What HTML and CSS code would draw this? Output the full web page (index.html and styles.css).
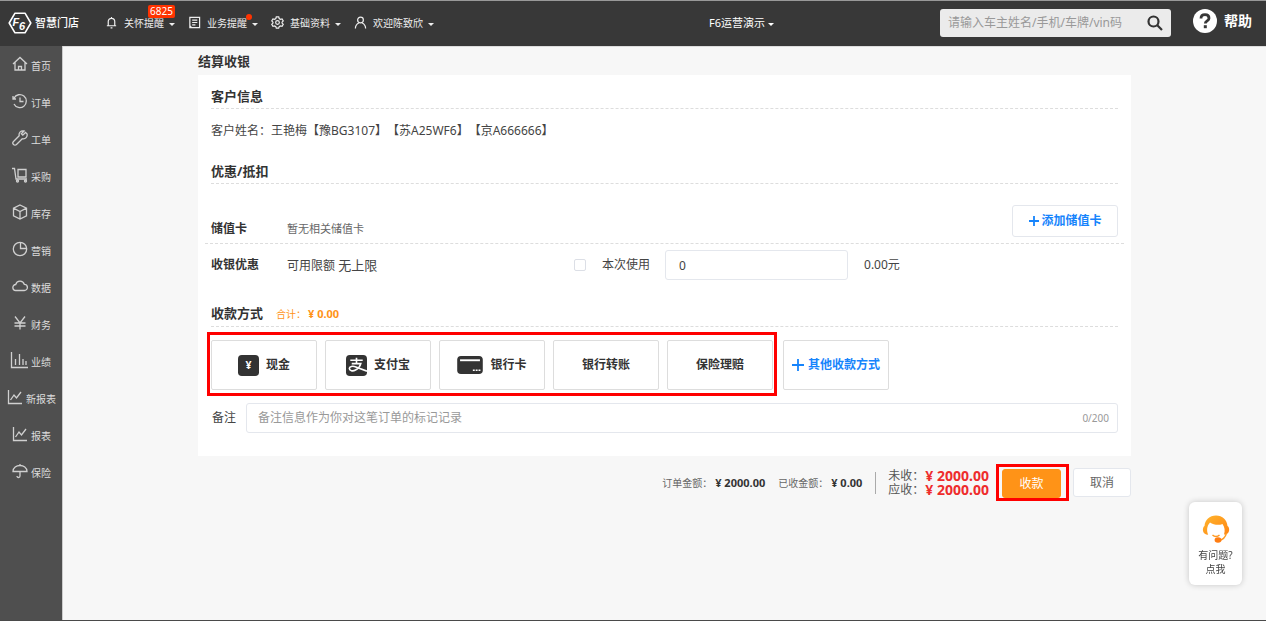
FILE: index.html
```html
<!DOCTYPE html>
<html lang="zh-CN">
<head>
<meta charset="utf-8">
<title>结算收银</title>
<link rel="stylesheet" href="styles.css">
</head>
<body>
<header class="topbar">
  <a class="brand" href="#">
    <svg class="brand-mark" viewBox="0 0 24 22" aria-hidden="true">
      <path d="M7 1.2h10L22.8 11 17 20.8H7L1.2 11z" fill="none" stroke="#fff" stroke-width="1.6" stroke-linejoin="round"/>
      <text x="4.500" y="13.500" class="mark-letter">F</text>
      <text x="11" y="17.500" class="mark-letter">6</text>
    </svg>
    <span class="brand-name">智慧门店</span>
  </a>
  <nav class="menu">
    <button class="menu-item" type="button">
      <svg class="ico" viewBox="0 0 14 14"><path d="M3.5 10.5V6a3.5 3.5 0 0 1 7 0v4.500M2 10.500h10M7 2.500V1M6 12.800h2"/></svg>
      <span>关怀提醒</span><i class="caret"></i><b class="badge">6825</b>
    </button>
    <button class="menu-item" type="button">
      <svg class="ico" viewBox="0 0 14 14"><path d="M2 1.500h10.500v11H2zM4.500 4.500H10M4.500 7H10M4.500 9.500H8M2 10.500l2 2"/></svg>
      <span>业务提醒</span><i class="caret"></i><b class="dot"></b>
    </button>
    <button class="menu-item" type="button">
      <svg class="ico" viewBox="0 0 14 14"><path d="M5.700 1h2.600l.5 1.700 1.300.8 1.800-.4 1.300 2.200-1.300 1.300v1l1.300 1.300-1.300 2.200-1.800-.4-1.300.8-.5 1.500H5.700l-.5-1.500-1.300-.8-1.800.4L.8 8.900l1.300-1.300v-1L.8 5.300l1.300-2.200 1.800.4 1.300-.8z"/><circle cx="7" cy="7" r="2"/></svg>
      <span>基础资料</span><i class="caret"></i>
    </button>
    <button class="menu-item" type="button">
      <svg class="ico" viewBox="0 0 14 14"><circle cx="7" cy="4.300" r="3.100"/><path d="M1.500 13.500c0-3 1.500-5 3.700-6M12.500 13.500c0-3-1.500-5-3.700-6"/></svg>
      <span>欢迎陈致欣</span><i class="caret"></i>
    </button>
  </nav>
  <button class="store" type="button">F6运营演示<i class="caret"></i></button>
  <form class="search">
    <input type="text" aria-label="搜索" placeholder="请输入车主姓名/手机/车牌/vin码">
    <button type="button" aria-label="搜索">
      <svg viewBox="0 0 16 16"><circle cx="6.500" cy="6.500" r="5"/><path d="M10.300 10.300L15 15"/></svg>
    </button>
  </form>
  <a class="help" href="#">
    <svg viewBox="0 0 24 24" aria-hidden="true"><circle cx="12" cy="12" r="12" fill="#fff"/><path d="M8 9.500C8 7 9.700 5.700 12 5.700s4 1.300 4 3.500c0 2.600-3.700 2.600-3.700 5.300" fill="none" stroke="#383838" stroke-width="2.800"/><rect x="10.800" y="16.200" width="3" height="3" fill="#383838"/></svg>
    <span>帮助</span>
  </a>
</header>

<div class="shell">
  <aside class="sidebar">
    <a href="#"><svg viewBox="0 0 16 16"><path d="M1 8l7-6.500L15 8M3 6.500V14h10V6.500M6.500 14v-3.500h3V14"/></svg>首页</a>
    <a href="#"><svg viewBox="0 0 16 16"><path d="M2 5.200A6.500 6.500 0 1 1 2 11M1 3v3h3M8 4.500V8.500h3.500"/></svg>订单</a>
    <a href="#"><svg viewBox="0 0 16 16"><path d="M13.500 2.500l-2.700 2.700-1.500-1.500L12 1C9 .2 6.500 2.500 7.200 5.700L1.500 11.500a2 2 0 0 0 3 3l5.800-5.700c3.200.7 5.500-2 4.700-5z"/></svg>工单</a>
    <a href="#"><svg viewBox="0 0 16 16"><path d="M0 1.500h2.500L4 12h11M6 2.500h8V10H6z"/><circle cx="5.500" cy="14" r="1"/><circle cx="13.500" cy="14" r="1"/></svg>采购</a>
    <a href="#"><svg viewBox="0 0 16 16"><path d="M8 1l6.500 3.200v7.600L8 15l-6.500-3.200V4.200zM1.500 4.200L8 7.500l6.500-3.300M8 7.500V15"/></svg>库存</a>
    <a href="#"><svg viewBox="0 0 16 16"><circle cx="8" cy="8" r="6.700"/><path d="M8.500 1.500v6h6"/></svg>营销</a>
    <a href="#"><svg viewBox="0 0 16 16"><path d="M4 12.500a3 3 0 0 1-.3-6A4.500 4.500 0 0 1 12.300 6.300a3.100 3.100 0 0 1 0 6.200z"/></svg>数据</a>
    <a href="#"><svg viewBox="0 0 16 16"><path d="M3 1.500L8 8l5-6.500M8 8v6.500M2.500 8h11M2.500 11h11"/></svg>财务</a>
    <a href="#"><svg class="wide" viewBox="0 0 18 18"><path d="M1.500 1v15.500H18M5.500 14V8M9.500 14V3M13 14V8M16 14v-4"/></svg>业绩</a>
    <a href="#"><svg viewBox="0 0 16 16"><path d="M1.500 1v13.500H15M3.500 11L7 6l2.500 3 4.500-6"/></svg>新报表</a>
    <a href="#"><svg viewBox="0 0 16 16"><path d="M1.500 1v13.500H15M3.500 11L7 6l2.500 3 4.500-6"/></svg>报表</a>
    <a href="#"><svg viewBox="0 0 16 16"><path d="M1 8.500c0-8 14-8 14 0zM8 8.500V13a1.500 1.500 0 0 1-3 0M8 1v1.500"/></svg>保险</a>
  </aside>

  <main class="main">
    <div class="page">
      <h1 class="page-title">结算收银</h1>
      <section class="card">
        <h2 class="section-title">客户信息</h2>
        <p class="customer">客户姓名：王艳梅【豫BG3107】【苏A25WF6】【京A666666】</p>

        <h2 class="section-title">优惠/抵扣</h2>
        <div class="row row-card">
          <strong class="row-name">储值卡</strong>
          <span class="row-hint">暂无相关储值卡</span>
          <button class="btn add-card" type="button">
            <svg viewBox="0 0 12 12"><path d="M6 1v10M1 6h10"/></svg>添加储值卡
          </button>
        </div>
        <div class="row row-discount">
          <strong class="row-name">收银优惠</strong>
          <span class="limit">可用限额 <em>无上限</em></span>
          <label class="use"><input type="checkbox"><span>本次使用</span></label>
          <input class="amount" type="text" value="0" aria-label="本次使用金额">
          <span class="money">0.00元</span>
        </div>

        <h2 class="section-title">收款方式<small class="total">合计：<b>¥ 0.00</b></small></h2>
        <div class="methods">
          <div class="method-group">
            <button class="method" type="button">
              <svg class="pic" viewBox="0 0 22 22"><rect width="22" height="22" rx="4" fill="#333"/><text x="11" y="15" class="yen">¥</text></svg>现金
            </button>
            <button class="method" type="button">
              <svg class="pic" viewBox="0 0 22 22"><rect width="22" height="22" rx="4" fill="#333"/><path d="M11 3v6M4.500 5.500h13M6 9h9.500c-.8 3-3 5.500-5.500 6.800-3 1.500-6.500.7-6.500-1.600 0-2.400 3.500-3 6.800-1.700L22 17" fill="none" stroke="#fff" stroke-width="1.700"/></svg>支付宝
            </button>
            <button class="method" type="button">
              <svg class="pic bank" viewBox="0 0 27 19"><rect width="27" height="19" rx="4" fill="#333"/><path d="M3 4.500h21" stroke="#fff" stroke-width="2"/><path d="M16.500 15h2M19.500 15h2M22.500 15h2" stroke="#fff" stroke-width="1.500"/></svg>银行卡
            </button>
            <button class="method" type="button">银行转账</button>
            <button class="method" type="button">保险理赔</button>
          </div>
          <button class="method other" type="button">
            <svg viewBox="0 0 12 12"><path d="M6 0v12M0 6h12"/></svg>其他收款方式
          </button>
        </div>
        <div class="remark">
          <label for="remark">备注</label>
          <div class="remark-box">
            <input id="remark" type="text" placeholder="备注信息作为你对这笔订单的标记记录">
            <span class="counter">0/200</span>
          </div>
        </div>
      </section>

      <footer class="summary">
        <span class="sum">订单金额：<b>¥ 2000.00</b></span>
        <span class="sum">已收金额：<b>¥ 0.00</b></span>
        <dl class="due">
          <div><dt>未收：</dt><dd>¥ 2000.00</dd></div>
          <div><dt>应收：</dt><dd>¥ 2000.00</dd></div>
        </dl>
        <span class="marked"><button class="btn pay" type="button">收款</button></span>
        <button class="btn cancel" type="button">取消</button>
      </footer>
    </div>
  </main>
</div>

<a class="assistant" href="#">
  <svg viewBox="0 0 28 28" aria-hidden="true">
    <defs><linearGradient id="hair" x1="0" y1="0" x2="1" y2="1"><stop offset="0" stop-color="#ffb62e"/><stop offset="1" stop-color="#ff8412"/></linearGradient></defs>
    <path d="M14 .5C7.500.5 3 5 2.500 11 .5 12 .3 17 2.500 18.500c1 .8 2.200 1.200 3.700 1.300C4.500 16 4.700 11 8 7.500 11.500 10 17 10.500 20.500 9c2.300 3 2.700 7 1.500 10.500 1.500 0 3-.2 4-1.500 1.800-2 1.500-6-.5-7C25 5 20.500.5 14 .5z" fill="url(#hair)"/>
    <path d="M24.500 18c-1 4-4 7-8 7.500M10.500 20c2 2 5 2 7 0" fill="none" stroke="#ff9a20" stroke-width="1.400"/>
    <ellipse cx="16" cy="25" rx="3.400" ry="2.700" fill="#ff7d12"/>
  </svg>
  <span>有问题?</span>
  <span>点我</span>
</a>
</body>
</html>
```

FILE: styles.css
```css
* { box-sizing: border-box; }

body {
  margin: 0;
  min-height: 100vh;
  display: flex;
  flex-direction: column;
  background: #f7f7f7;
  border-bottom: 1px solid #4a4a4a;
  color: #555;
  font: 12px/18px "Noto Sans", "Noto Sans CJK SC", sans-serif;
}

button, input { font: inherit; color: inherit; }
button { padding: 0; border: 0; background: none; cursor: pointer; white-space: nowrap; }
a { color: inherit; text-decoration: none; }
svg { display: block; flex: none; }

/* Top bar */
.topbar {
  height: 46px;
  display: flex;
  align-items: center;
  padding: 0 14px 2px 8px;
  background: #383838;
  border-top: 1px solid #999;
  color: #eee;
}
.brand { display: flex; align-items: center; gap: 3px; }
.brand-mark { width: 24px; height: 22px; }
.mark-letter { fill: #fff; font: italic bold 11px "Liberation Sans", sans-serif; }
.brand-name { font-size: 11px; font-weight: 500; color: #fff; }
.menu { display: flex; gap: 13px; margin-left: 26px; font-size: 10px; }
.menu-item { position: relative; display: flex; align-items: center; }
.ico { width: 13px; height: 13px; margin-right: 6px; fill: none; stroke: #eee; stroke-width: 1.3; }
.caret { border: 3px solid transparent; border-top-color: currentColor; border-bottom: 0; margin: 3px 0 0 5px; }
.badge {
  position: absolute; top: -9px; right: 0;
  padding: 0 2px;
  border-radius: 2px;
  background: #f30;
  color: #fff;
  font-size: 10px; font-weight: 400; line-height: 13px;
}
.dot { position: absolute; top: 0; right: 6px; width: 6px; height: 6px; border-radius: 50%; background: #f30; }
.store { display: flex; align-items: center; margin-left: auto; margin-right: 166px; font-size: 11px; color: #fff; }
.store .caret { margin-left: 3px; }
.search {
  width: 231px; height: 28px;
  display: flex; align-items: center;
  padding: 0 8px;
  border-radius: 3px;
  background: #ebebeb;
}
.search input { flex: 1; min-width: 0; padding: 0; border: 0; background: none; color: #333; outline: 0; }
.search svg { width: 16px; height: 16px; fill: none; stroke: #333; stroke-width: 2.2; }
::placeholder { color: #999; opacity: 1; }
.help { display: flex; align-items: center; gap: 7px; margin-left: 22px; padding-bottom: 3px; color: #fff; font-size: 14px; font-weight: 700; }
.help svg { width: 24px; height: 24px; }

/* Side bar */
.shell { flex: 1; display: flex; }
.sidebar { width: 63px; flex: none; background: #4f4f4f; border-right: 1px solid #ccc; font-size: 10px; color: #ddd; }
.sidebar a { height: 37px; display: flex; align-items: center; justify-content: center; gap: 3px; padding: 2px 0 0 1px; white-space: nowrap; }
.sidebar svg { width: 16px; height: 16px; margin-bottom: 4px; fill: none; stroke: #d0d0d0; stroke-width: 1.3; }
.sidebar .wide { width: 18px; height: 18px; margin-left: -2px; }

/* Page */
.main { flex: 1; min-width: 0; border-top: 1px solid #ddd; }
.page { max-width: 933px; margin: 0 auto; }
.page-title { margin: 0; padding: 4px 0; font-size: 13px; line-height: 20px; color: #333; }
.card { padding: 11px 13px 23px; background: #fff; color: #444; }
.section-title {
  margin: 0;
  padding-bottom: 1px;
  border-bottom: 1px dashed #ddd;
  font-size: 13px; line-height: 21px; color: #333;
}
.customer { margin: 13px 0 21px; text-spacing-trim: space-all; }
.row { display: flex; align-items: center; margin: 0 -6px; padding: 0 6px; }
.row-card { padding-top: 19px; padding-bottom: 5px; border-bottom: 1px dashed #ddd; }
.row-name { width: 76px; color: #333; }
.row-card .row-name, .row-hint { padding-top: 17px; }
.row-hint { font-size: 11px; color: #666; }
.btn { border: 1px solid #e4e7ed; border-radius: 3px; background: #fff; }
.add-card {
  width: 106px; height: 32px;
  display: flex; align-items: center; justify-content: center; gap: 1px;
  margin-left: auto;
  color: #1684fc; font-weight: 700;
}
.add-card svg, .other svg { width: 12px; height: 12px; fill: none; stroke: #1684fc; stroke-width: 1.8; }
.row-discount { padding-top: 6px; }
.limit { width: 287px; }
.limit em { font-style: normal; font-size: 13px; }
.use { display: flex; align-items: center; gap: 16px; }
.use input { appearance: none; width: 12px; height: 12px; margin: 0; border: 1px solid #dcdfe6; border-radius: 2px; background: #fff; }
.amount { width: 183px; height: 30px; margin: 0 16px 0 15px; padding: 0 13px; border: 1px solid #e4e7ed; border-radius: 3px; }
.row-discount + .section-title { margin-top: 23px; }
.total { margin-left: 13px; font-size: 10px; font-weight: 400; color: #ff9317; }
.total b { margin-left: 2px; font-size: 11px; }

.methods { display: flex; gap: 10px; margin-top: 13px; }
.method-group { position: relative; display: flex; gap: 8px; }
.method-group::after { content: ""; position: absolute; inset: -8px -4px -6px -4px; border: 3px solid #f00; pointer-events: none; }
.method {
  width: 106px; height: 50px;
  display: flex; align-items: center; justify-content: center; gap: 7px;
  border: 1px solid #ddd; border-radius: 2px;
  background: #fff;
  color: #333; font-weight: 700;
}
.pic { width: 21px; height: 21px; }
.bank { width: 26px; height: 18px; }
.yen { fill: #fff; font: bold 11px "Noto Sans", sans-serif; text-anchor: middle; }
.other { color: #1684fc; gap: 4px; }

.remark { display: flex; align-items: center; gap: 10px; margin-top: 13px; padding-left: 1px; }
.remark-box { flex: 1; height: 30px; display: flex; align-items: center; padding: 0 8px 0 11px; border: 1px solid #e4e7ed; border-radius: 3px; }
.remark-box input { flex: 1; min-width: 0; padding: 0; border: 0; outline: 0; }
.counter { font-size: 10px; color: #999; }

.summary { display: flex; align-items: center; justify-content: flex-end; margin-top: 8px; }
.sum { margin-right: 13px; font-size: 10px; color: #666; }
.sum b { margin-left: 3px; font-size: 11px; color: #333; }
.due { margin: 0 7px 0 0; padding-left: 13px; line-height: 14px; background: linear-gradient(#aaa, #aaa) left center / 1px 22px no-repeat; }
.due div { display: flex; align-items: center; gap: 1px; }
.due dt { font-size: 12px; }
.due dd { margin: 0; font-size: 14px; font-weight: 700; color: #ee2c2c; }
.marked { display: flex; padding: 2px 5px 0 3px; border: 3px solid #f00; }
.pay { width: 59px; height: 29px; border-color: #ff9317; background: #ff9317; color: #fff; }
.cancel { width: 58px; height: 29px; margin-left: 4px; color: #666; }

/* Floating help card */
.assistant {
  position: fixed; right: 24px; bottom: 36px;
  width: 53px; height: 83px;
  display: flex; flex-direction: column; align-items: center;
  padding-top: 13px;
  border-radius: 6px;
  background: #fff;
  box-shadow: 0 0 6px rgba(0, 0, 0, .2);
  font-size: 10px; line-height: 14px; color: #444;
}
.assistant svg { width: 28px; height: 28px; margin-bottom: 5px; }
```
